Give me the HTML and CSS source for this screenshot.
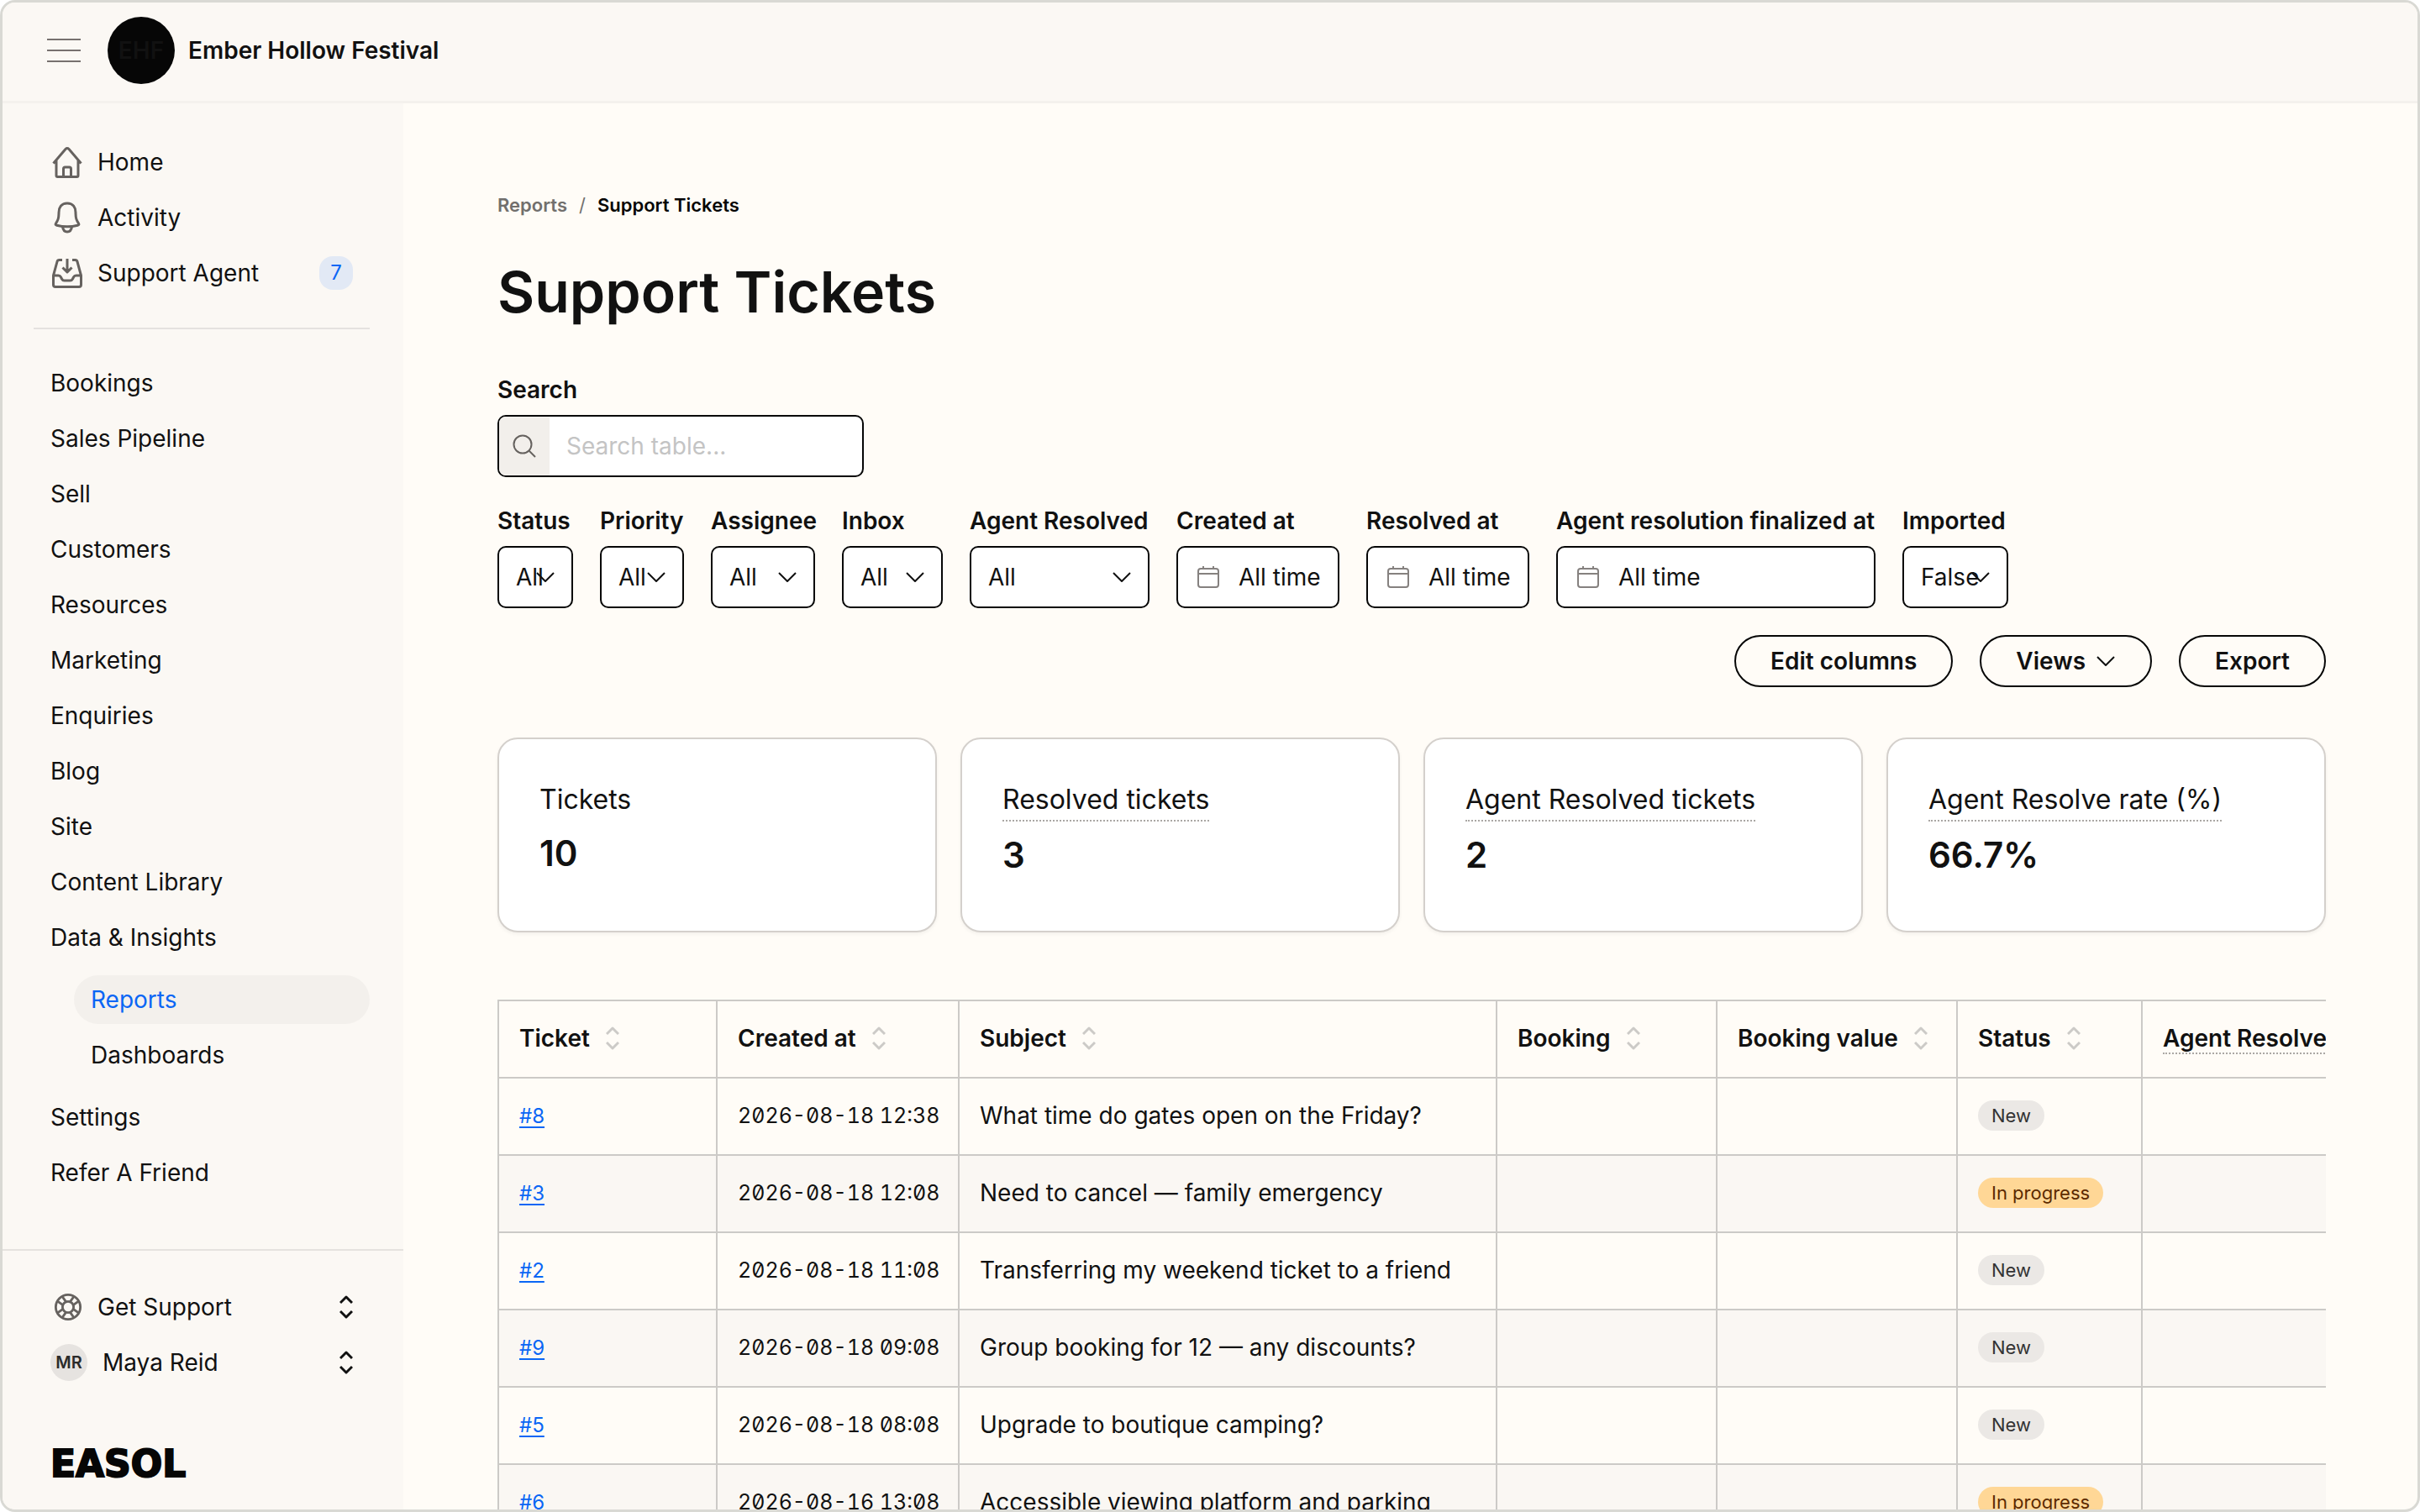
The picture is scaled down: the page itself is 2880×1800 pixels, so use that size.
FILE: index.html
```html
<!DOCTYPE html>
<html lang="en">
<head>
    <meta charset="UTF-8">
    <meta name="viewport" content="width=device-width, initial-scale=1.0">
    <title>Support Tickets - Ember Hollow Festival</title>
    <link rel="stylesheet" href="styles.css">
</head>
<body>
    <!-- Shared icons -->
    <svg class="sprite" width="0" height="0" aria-hidden="true">
        <symbol id="chevron" viewBox="0 0 24 24"><path d="M2 7l10 10L22 7"/></symbol>
        <symbol id="updown" viewBox="0 0 16 28"><path d="M1 9l7-7 7 7M1 19l7 7 7-7"/></symbol>
        <symbol id="calendar" viewBox="0 0 28 28"><rect x="2" y="4" width="24" height="22" rx="3"/><path d="M2 10h24M8 1v3M20 1v3"/></symbol>
    </svg>

    <div class="window">
        <header class="topbar">
            <button class="menu-btn" type="button" aria-label="Toggle menu">
                <svg width="40" height="28" viewBox="0 0 40 28"><path d="M0 1h40M0 14h40M0 27h40"/></svg>
            </button>
            <span class="brand-logo">EHF</span>
            <span class="brand-name">Ember Hollow Festival</span>
        </header>

        <div class="layout">
            <aside class="sidebar">
                <nav>
                    <ul class="nav nav-top">
                        <li><a href="#">
                            <svg width="36" height="38" viewBox="0 0 36 38"><path d="M1.500 20.500L16 3.500q2-2 4 0L34.500 20.500M5 17v18q0 1.500 1.500 1.500h23q1.500 0 1.500-1.500V17M13.500 36V27q0-2 2-2h5q2 0 2 2v9"/></svg>
                            Home</a></li>
                        <li><a href="#">
                            <svg width="36" height="38" viewBox="0 0 36 38"><path d="M18 2C11 2 8 7 8 13c0 7-1 9-3.500 13-.8 1.500-.2 2 1 2.300 8 2 17 2 25 0 1.200-.3 1.800-.8 1-2.300C29 22 28 20 28 13 28 7 25 2 18 2zM12.500 30c.5 3.500 2.500 6 5.500 6s5-2.500 5.500-6"/></svg>
                            Activity</a></li>
                        <li><a href="#">
                            <svg width="36" height="38" viewBox="0 0 36 38"><path d="M18 2v15M12.500 12.500L18 18l5.500-5.500M12 3.500H8.500Q6.500 3.500 6 5.500L1.500 22v11q0 2.500 2.500 2.500h28q2.500 0 2.500-2.500V22L30 5.500q-.5-2-2.500-2H24M1.500 22h6q2 0 3 2l1 2q1 2 3 2h7q2 0 3-2l1-2q1-2 3-2h6"/></svg>
                            Support Agent <span class="count">7</span></a></li>
                    </ul>
                    <ul class="nav nav-main">
                        <li><a href="#">Bookings</a></li>
                        <li><a href="#">Sales Pipeline</a></li>
                        <li><a href="#">Sell</a></li>
                        <li><a href="#">Customers</a></li>
                        <li><a href="#">Resources</a></li>
                        <li><a href="#">Marketing</a></li>
                        <li><a href="#">Enquiries</a></li>
                        <li><a href="#">Blog</a></li>
                        <li><a href="#">Site</a></li>
                        <li><a href="#">Content Library</a></li>
                        <li><a href="#">Data &amp; Insights</a>
                            <ul class="subnav">
                                <li><a href="#" class="active">Reports</a></li>
                                <li><a href="#">Dashboards</a></li>
                            </ul>
                        </li>
                        <li><a href="#">Settings</a></li>
                        <li><a href="#">Refer A Friend</a></li>
                    </ul>
                </nav>
                <div class="sidebar-footer">
                    <button class="account" type="button">
                        <svg class="lifebuoy" width="34" height="34" viewBox="0 0 36 36"><circle cx="18" cy="18" r="15.500"/><circle cx="18" cy="18" r="7"/><path d="M10.500 4.500l5 7M4.500 10.500l7 5M25.500 4.500l-5 7M31.500 10.500l-7 5M10.500 31.500l5-7M4.500 25.500l7-5M25.500 31.500l-5-7M31.500 25.500l-7-5"/></svg>
                        Get Support
                        <svg class="updown" width="16" height="28"><use href="#updown"/></svg>
                    </button>
                    <button class="account" type="button">
                        <span class="avatar">MR</span>
                        Maya Reid
                        <svg class="updown" width="16" height="28"><use href="#updown"/></svg>
                    </button>
                    <div class="easol">EASOL</div>
                </div>
            </aside>

            <main class="content">
                <nav class="breadcrumb" aria-label="Breadcrumb">
                    <a href="#">Reports</a><span class="slash">/</span><span>Support Tickets</span>
                </nav>
                <h1>Support Tickets</h1>

                <div class="field search-field">
                    <label for="search">Search</label>
                    <div class="search-box">
                        <span class="search-icon"><svg width="28" height="28" viewBox="0 0 28 28"><circle cx="12" cy="12" r="10.500"/><path d="M19.500 19.500L27 27"/></svg></span>
                        <input id="search" type="text" placeholder="Search table...">
                    </div>
                </div>

                <div class="filters">
                    <div class="field">
                        <label for="status">Status</label>
                        <div class="select"><select id="status"><option>All</option></select><svg width="24" height="24"><use href="#chevron"/></svg></div>
                    </div>
                    <div class="field">
                        <label for="priority">Priority</label>
                        <div class="select"><select id="priority"><option>All</option></select><svg width="24" height="24"><use href="#chevron"/></svg></div>
                    </div>
                    <div class="field">
                        <label for="assignee">Assignee</label>
                        <div class="select"><select id="assignee"><option>All</option></select><svg width="24" height="24"><use href="#chevron"/></svg></div>
                    </div>
                    <div class="field">
                        <label for="inbox">Inbox</label>
                        <div class="select"><select id="inbox"><option>All</option></select><svg width="24" height="24"><use href="#chevron"/></svg></div>
                    </div>
                    <div class="field">
                        <label for="agent-resolved">Agent Resolved</label>
                        <div class="select"><select id="agent-resolved"><option>All</option></select><svg width="24" height="24"><use href="#chevron"/></svg></div>
                    </div>
                    <div class="field">
                        <label for="created-at">Created at</label>
                        <button id="created-at" class="date" type="button"><svg width="28" height="28"><use href="#calendar"/></svg>All time</button>
                    </div>
                    <div class="field">
                        <label for="resolved-at">Resolved at</label>
                        <button id="resolved-at" class="date" type="button"><svg width="28" height="28"><use href="#calendar"/></svg>All time</button>
                    </div>
                    <div class="field">
                        <label for="finalized-at">Agent resolution finalized at</label>
                        <button id="finalized-at" class="date" type="button"><svg width="28" height="28"><use href="#calendar"/></svg>All time</button>
                    </div>
                    <div class="field">
                        <label for="imported">Imported</label>
                        <div class="select"><select id="imported"><option>False</option></select><svg width="24" height="24"><use href="#chevron"/></svg></div>
                    </div>
                </div>

                <div class="actions">
                    <button class="btn" type="button">Edit columns</button>
                    <button class="btn" type="button">Views <svg width="24" height="24"><use href="#chevron"/></svg></button>
                    <button class="btn" type="button">Export</button>
                </div>

                <section class="cards">
                    <div class="card"><span class="card-label">Tickets</span><strong>10</strong></div>
                    <div class="card"><span class="card-label hint">Resolved tickets</span><strong>3</strong></div>
                    <div class="card"><span class="card-label hint">Agent Resolved tickets</span><strong>2</strong></div>
                    <div class="card"><span class="card-label hint">Agent Resolve rate (%)</span><strong>66.7%</strong></div>
                </section>

                <div class="table-wrap">
                    <table>
                        <colgroup>
                            <col class="col-ticket"><col class="col-created"><col class="col-subject"><col class="col-booking"><col class="col-value"><col class="col-status"><col class="col-agent">
                        </colgroup>
                        <thead>
                            <tr>
                                <th>Ticket <svg width="16" height="28"><use href="#updown"/></svg></th>
                                <th>Created at <svg width="16" height="28"><use href="#updown"/></svg></th>
                                <th>Subject <svg width="16" height="28"><use href="#updown"/></svg></th>
                                <th>Booking <svg width="16" height="28"><use href="#updown"/></svg></th>
                                <th>Booking value <svg width="16" height="28"><use href="#updown"/></svg></th>
                                <th>Status <svg width="16" height="28"><use href="#updown"/></svg></th>
                                <th><span class="hint">Agent Resolved</span></th>
                            </tr>
                        </thead>
                        <tbody>
                            <tr><td><a href="#">#8</a></td><td class="time">2026-08-18 12:38</td><td>What time do gates open on the Friday?</td><td></td><td></td><td><span class="pill">New</span></td><td></td></tr>
                            <tr><td><a href="#">#3</a></td><td class="time">2026-08-18 12:08</td><td>Need to cancel — family emergency</td><td></td><td></td><td><span class="pill progress">In progress</span></td><td></td></tr>
                            <tr><td><a href="#">#2</a></td><td class="time">2026-08-18 11:08</td><td>Transferring my weekend ticket to a friend</td><td></td><td></td><td><span class="pill">New</span></td><td></td></tr>
                            <tr><td><a href="#">#9</a></td><td class="time">2026-08-18 09:08</td><td>Group booking for 12 — any discounts?</td><td></td><td></td><td><span class="pill">New</span></td><td></td></tr>
                            <tr><td><a href="#">#5</a></td><td class="time">2026-08-18 08:08</td><td>Upgrade to boutique camping?</td><td></td><td></td><td><span class="pill">New</span></td><td></td></tr>
                            <tr><td><a href="#">#6</a></td><td class="time">2026-08-16 13:08</td><td>Accessible viewing platform and parking</td><td></td><td></td><td><span class="pill progress">In progress</span></td><td></td></tr>
                        </tbody>
                    </table>
                </div>
            </main>
        </div>
    </div>
</body>
</html>
```

FILE: styles.css
```css
* {
    box-sizing: border-box;
}
body {
    margin: 0;
    background: #fff;
    color: #111;
    font-family: Inter, "Liberation Sans", sans-serif;
    font-size: 28px;
    line-height: 40px;
}
button, input, select {
    font: inherit;
    color: inherit;
}
button {
    cursor: pointer;
}
a {
    color: inherit;
    text-decoration: none;
}
ul {
    list-style: none;
    margin: 0;
    padding: 0;
}
svg {
    fill: none;
    stroke: currentColor;
    stroke-width: 2;
    stroke-linejoin: round;
    flex: none;
}
.sprite {
    position: absolute;
}
.window {
    height: 100vh;
    display: flex;
    flex-direction: column;
    overflow: hidden;
    border: 3px solid #d9d9d4;
    border-radius: 18px;
    background: #fffcf7;
}

/* Top bar */
.topbar {
    flex: none;
    display: flex;
    align-items: center;
    height: 120px;
    padding: 0 53px 3px;
    background: #fbf8f4;
    border-bottom: 3px solid #f4f1ed;
}
.menu-btn {
    display: flex;
    padding: 0;
    border: 0;
    background: none;
    color: #77716f;
}
.brand-logo {
    display: flex;
    align-items: center;
    justify-content: center;
    width: 80px;
    height: 80px;
    margin: 0 16px 0 32px;
    border-radius: 50%;
    background: #060606;
    color: #111;
    font-weight: 600;
}
.brand-name {
    font-weight: 600;
}

/* Sidebar */
.layout {
    flex: 1;
    display: flex;
    min-height: 0;
}
.sidebar {
    flex: none;
    width: 477px;
    display: flex;
    flex-direction: column;
    justify-content: space-between;
    background: #fbf8f4;
}
.nav {
    margin: 0 40px 0 37px;
}
.nav a {
    display: flex;
    align-items: center;
    height: 66px;
    padding: 0 20px;
}
.nav-top {
    padding: 37px 0 32px;
    border-bottom: 2px solid #e5e2df;
}
.nav-top svg {
    margin: 0 18px 0 2px;
    color: #66625f;
    stroke-width: 3;
}
.nav-main {
    padding-top: 31px;
}
.count {
    width: 40px;
    height: 40px;
    margin-left: auto;
    border-radius: 16px;
    background: #e2e9f5;
    color: #0a66f5;
    font-size: 24px;
    text-align: center;
}
.subnav {
    padding: 12px 0 4px 48px;
}
.subnav a {
    height: 58px;
    margin-bottom: 8px;
    border-radius: 29px;
}
.subnav .active {
    background: #f3f0ec;
    color: #0a66f5;
}
.sidebar-footer {
    border-top: 2px solid #e5e2df;
    padding: 34px 60px 30px 57px;
}
.account {
    display: flex;
    align-items: center;
    width: 100%;
    height: 66px;
    padding: 0;
    border: 0;
    background: none;
    text-align: left;
}
.lifebuoy {
    margin: 0 18px 0 4px;
    color: #66625f;
    stroke-width: 3;
}
.updown {
    margin-left: auto;
    stroke-width: 3;
}
.avatar {
    width: 44px;
    height: 44px;
    margin-right: 18px;
    border-radius: 50%;
    background: #e6e3e0;
    color: #2b2b2b;
    font-size: 20px;
    font-weight: 600;
    line-height: 44px;
    text-align: center;
}
.easol {
    margin-top: 64px;
    color: #060606;
    font-family: "DejaVu Sans", sans-serif;
    font-size: 44px;
    font-weight: 700;
    line-height: 48px;
    -webkit-text-stroke: 2px #060606;
}

/* Content */
.content {
    flex: 1;
    min-width: 0;
    padding: 105px 109px 0 112px;
}
.breadcrumb {
    display: flex;
    gap: 14px;
    font-size: 22px;
    font-weight: 600;
    line-height: 32px;
    color: #060606;
}
.breadcrumb a,
.slash {
    color: #716f6d;
}
.slash {
    font-weight: 400;
}
h1 {
    margin: 47px 0 57px;
    font-size: 68px;
    font-weight: 600;
    line-height: 80px;
}
.field label {
    display: block;
    margin-bottom: 10px;
    font-weight: 600;
    white-space: nowrap;
}
.search-box,
.select select,
.date {
    width: 100%;
    height: 74px;
    border: 2px solid #060606;
    border-radius: 10px;
    background: #fff;
}
.search-field {
    width: 436px;
    margin-bottom: 32px;
}
.search-box {
    display: flex;
    overflow: hidden;
}
.search-icon {
    display: flex;
    align-items: center;
    padding: 0 16px;
    background: #f2efeb;
    color: #66625f;
}
.search-box input {
    flex: 1;
    min-width: 0;
    padding: 0 20px;
    border: 0;
    outline: 0;
    background: none;
}
.search-box input::placeholder {
    color: #c4c4c4;
}
.filters {
    display: grid;
    grid-template-columns: 90px 100px 124px 120px 214px 194px 194px 380px 126px;
    gap: 32px;
    margin-bottom: 32px;
}
.select {
    position: relative;
}
.select select {
    appearance: none;
    padding: 0 0 0 20px;
}
.select svg {
    position: absolute;
    top: 25px;
    right: 21px;
    pointer-events: none;
}
.date {
    display: flex;
    align-items: center;
    gap: 22px;
    padding: 0 22px;
    white-space: nowrap;
}
.date svg {
    color: #85817f;
}
.actions {
    display: flex;
    justify-content: flex-end;
    gap: 32px;
    margin-bottom: 60px;
}
.btn {
    display: flex;
    align-items: center;
    gap: 12px;
    height: 62px;
    padding: 0 41px;
    border: 2px solid #060606;
    border-radius: 31px;
    background: none;
    font-weight: 600;
}
.cards {
    display: grid;
    grid-template-columns: repeat(4, 1fr);
    gap: 28px;
    margin-bottom: 80px;
}
.card {
    display: flex;
    flex-direction: column;
    align-items: flex-start;
    height: 232px;
    padding: 48px;
    border: 2px solid #d4d0cc;
    border-radius: 24px;
    background: #fff;
    box-shadow: 0 2px 4px rgba(0,0,0,0.05);
}
.card-label {
    margin-bottom: 12px;
    font-size: 32px;
    line-height: 48px;
}
.card strong {
    font-size: 42px;
    font-weight: 600;
    line-height: 56px;
}
.hint {
    border-bottom: 2px dotted #aaa7a4;
}

/* Table */
.table-wrap {
    overflow: hidden;
}
table {
    table-layout: fixed;
    width: 2300px;
    border-collapse: separate;
    border-spacing: 0;
    border-top: 2px solid #cccac7;
}
.col-ticket { width: 260px; }
.col-created { width: 288px; }
.col-subject { width: 640px; }
.col-booking { width: 262px; }
.col-value { width: 286px; }
.col-status { width: 220px; }
th, td {
    height: 92px;
    padding: 0 24px 2px;
    border-left: 2px solid #cccac7;
    border-bottom: 2px solid #cccac7;
    text-align: left;
    white-space: nowrap;
}
th {
    font-weight: 600;
}
th svg {
    margin-left: 12px;
    vertical-align: -4px;
    color: #cccac7;
    stroke-width: 3;
}
tbody tr:nth-child(even) {
    background: #faf7f3;
}
td a {
    color: #0a66f5;
    font-size: 24px;
    text-decoration: underline;
    text-underline-offset: 4px;
}
.time {
    font-size: 25px;
    font-feature-settings: "tnum", "zero";
}
.pill {
    display: inline-block;
    padding: 0 16px;
    border-radius: 18px;
    background: #ebe8e5;
    color: #333;
    font-size: 22px;
    line-height: 36px;
    vertical-align: 2px;
}
.pill.progress {
    background: #ffd796;
    color: #5c2a00;
}
```
